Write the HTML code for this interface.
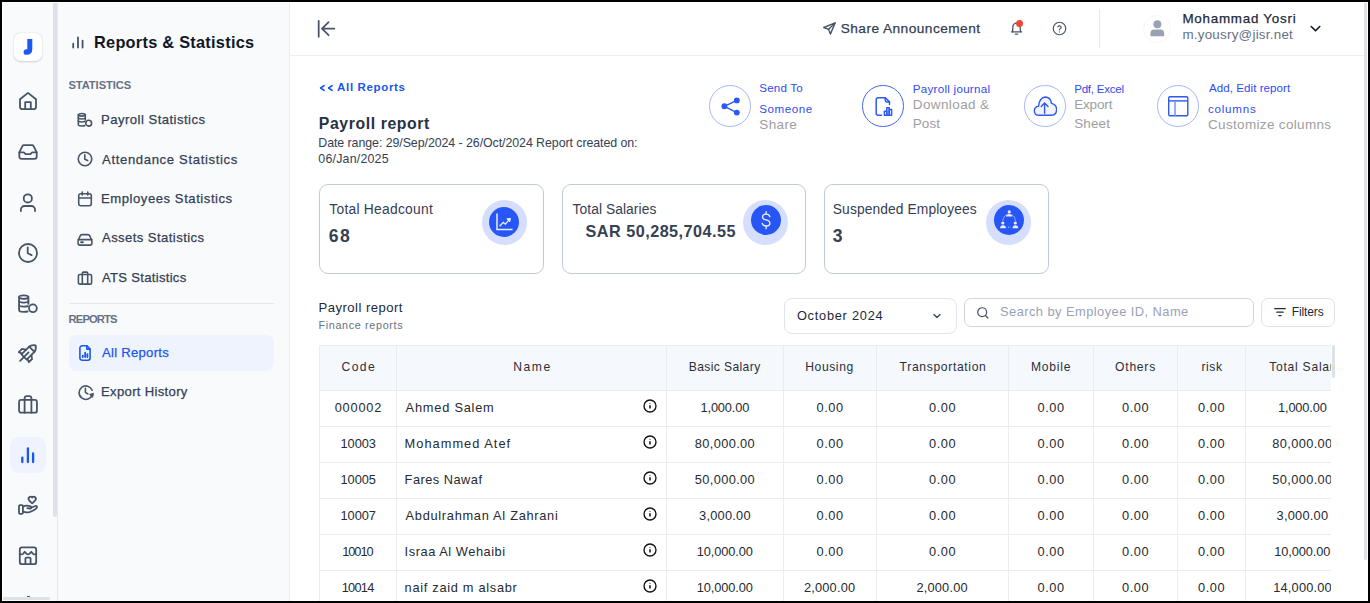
<!DOCTYPE html>
<html><head><meta charset="utf-8"><title>Payroll report</title>
<style>
*{margin:0;padding:0;box-sizing:border-box}
html,body{width:1370px;height:603px;overflow:hidden;background:#000}
body{position:relative;font-family:"Liberation Sans",sans-serif}
#app{position:absolute;left:0;top:0;width:1370px;height:603px;background:#fff;clip-path:inset(2px 2px 2px 2px);overflow:hidden}
.a{position:absolute}
.t{position:absolute;white-space:nowrap;line-height:1}
.m{-webkit-text-stroke:0.25px currentColor}
#clip{position:absolute;left:0;top:0;width:1331px;height:603px;overflow:hidden}
</style></head><body>
<div id="app">
<div class="a" style="left:3px;top:3px;width:54px;height:600px;background:#f9fafb"></div>
<div class="a" style="left:57px;top:3px;width:1px;height:600px;background:#e6e8ec"></div>
<div class="a" style="left:53px;top:3px;width:3.6px;height:514px;background:#dde1e8;border-radius:0 0 2px 2px"></div>
<div class="a" style="left:3px;top:597px;width:47px;height:3px;background:#dde1e8;border-radius:0 2px 2px 0"></div>
<div class="a" style="left:14px;top:33px;width:28.3px;height:28.3px;background:#fff;border-radius:7px;box-shadow:0 0.5px 2px rgba(16,24,40,0.18)"></div>
<svg class="a" style="left:14px;top:33px" width="28" height="28" viewBox="0 0 28 28"><path d="M13.3 6H18.3V16Q18.3 21.8 12.4 21.8Q9.6 21.8 9.6 19.2Q9.6 16.4 12.4 16.2H13.3Z" fill="#1c58f3"/></svg>
<div class="a" style="left:27px;top:595.6px;width:3px;height:1.6px;border-radius:1px;background:#475467"></div>
<div class="a" style="left:10px;top:437px;width:36px;height:36px;background:#eef3ff;border-radius:9px"></div>
<svg class="a" style="left:16.00px;top:89.30px" width="24" height="24" viewBox="0 0 24 24" fill="none" stroke="#475467" stroke-width="1.8" stroke-linecap="round" stroke-linejoin="round" ><path d="M4 10.2L12 3.9L20 10.2V18.1a2 2 0 0 1-2 2H6a2 2 0 0 1-2-2Z"/><path d="M9.2 20.1V13.2H14.8V20.1"/></svg>
<svg class="a" style="left:16.00px;top:139.80px" width="24" height="24" viewBox="0 0 24 24" fill="none" stroke="#475467" stroke-width="1.8" stroke-linecap="round" stroke-linejoin="round" ><path d="M3.3 12.3L6.4 6.1Q6.9 5.2 8 5.2H16Q17.1 5.2 17.6 6.1L20.7 12.3V16.8a2 2 0 0 1-2 2H5.3a2 2 0 0 1-2-2Z"/><path d="M3.3 12.3H7.3Q8.1 12.3 8.6 13L9.1 13.6Q9.6 14.2 10.4 14.2H13.6Q14.4 14.2 14.9 13.6L15.4 13Q15.9 12.3 16.7 12.3H20.7"/></svg>
<svg class="a" style="left:16.00px;top:191.00px" width="24" height="24" viewBox="0 0 24 24" fill="none" stroke="#475467" stroke-width="1.8" stroke-linecap="round" stroke-linejoin="round" ><circle cx="11.8" cy="7.4" r="4.1"/><path d="M4.9 20.1V18.6a3.6 3.6 0 0 1 3.6-3.6H15.4a3.6 3.6 0 0 1 3.6 3.6V20.1"/></svg>
<svg class="a" style="left:16.00px;top:240.60px" width="24" height="24" viewBox="0 0 24 24" fill="none" stroke="#475467" stroke-width="1.8" stroke-linecap="round" stroke-linejoin="round" ><circle cx="12" cy="12" r="9"/><path d="M11.7 6.3V12.3L15.6 14.1"/></svg>
<svg class="a" style="left:16.00px;top:292.00px" width="24" height="24" viewBox="0 0 24 24" fill="none" stroke="#475467" stroke-width="1.8" stroke-linecap="round" stroke-linejoin="round" ><ellipse cx="7.75" cy="5.1" rx="4.65" ry="1.7"/><path d="M3.1 5.1V18.3Q3.1 19.9 7.75 19.9Q9.9 19.9 11.6 19.5"/><path d="M12.4 5.1V11.9"/><path d="M3.1 9.1Q3.1 10.6 7.75 10.6Q12.4 10.6 12.4 9.1"/><path d="M3.1 13.1Q3.1 14.6 7.75 14.6Q10.6 14.6 12 14.1"/><circle cx="16.9" cy="16.3" r="3.9"/></svg>
<svg class="a" style="left:16.00px;top:341.40px" width="24" height="24" viewBox="0 0 24 24" fill="none" stroke="#475467" stroke-width="1.8" stroke-linecap="round" stroke-linejoin="round" ><g transform="rotate(45 12 12)"><path d="M8.3 17.6V7Q8.5 3.4 12 1.2Q15.5 3.4 15.7 7V17.6Z"/><path d="M8.3 6.6H15.7"/><path d="M8.3 10.8L4.9 13.4V17.9L8.3 16.6"/><path d="M15.7 10.8L19.1 13.4V17.9L15.7 16.6"/><path d="M12 11.2V23.2"/></g></svg>
<svg class="a" style="left:16.00px;top:391.80px" width="24" height="24" viewBox="0 0 24 24" fill="none" stroke="#475467" stroke-width="1.8" stroke-linecap="round" stroke-linejoin="round" ><rect x="3.1" y="7.9" width="17.8" height="12.8" rx="2"/><path d="M8.6 7.9V6.3a2.2 2.2 0 0 1 2.2-2.2h2.4a2.2 2.2 0 0 1 2.2 2.2V7.9"/><path d="M8.6 7.9V20.7M15.4 7.9V20.7"/></svg>
<svg class="a" style="left:16.00px;top:443.00px" width="24" height="24" viewBox="0 0 24 24" fill="none" stroke="#1a56f0" stroke-width="2.3" stroke-linecap="round" stroke-linejoin="round" ><path d="M6.3 19V14.6M11.9 19V5.3M17.1 19V10.5"/></svg>
<svg class="a" style="left:16.00px;top:492.60px" width="24" height="24" viewBox="0 0 24 24" fill="none" stroke="#475467" stroke-width="1.8" stroke-linecap="round" stroke-linejoin="round" ><rect x="3" y="12.2" width="3.9" height="8.6" rx="1"/><path d="M6.9 13.6Q9.5 12.2 12.5 12.8L14.5 13.3Q15.6 13.7 15.2 14.8Q14.8 15.7 13.6 15.5L11.3 15.2"/><path d="M15.2 14.8L19.2 13Q20.8 12.6 21 13.8Q21.1 14.6 20.3 15.3Q17.4 18 13.5 19.2Q11.2 19.7 9 19.1L6.9 18.6"/><path d="M16.2 10.4L13.3 7.6Q11.8 6 13.1 4.4Q14.6 2.8 16.2 4.5Q17.8 2.8 19.3 4.4Q20.6 6 19.1 7.6Z"/></svg>
<svg class="a" style="left:16.00px;top:544.20px" width="24" height="24" viewBox="0 0 24 24" fill="none" stroke="#475467" stroke-width="1.8" stroke-linecap="round" stroke-linejoin="round" ><rect x="3.8" y="3.4" width="16.4" height="16.8" rx="2.3"/><path d="M3.8 9.6Q5.6 11.2 7.3 9.6L8.7 7.8L10.4 9.6Q12 11.2 13.6 9.6L15.3 7.8L16.8 9.6Q18.5 11.2 20.2 9.6"/><path d="M9.4 20.2V14.6a1 1 0 0 1 1-1H13.6a1 1 0 0 1 1 1V20.2"/></svg>
<div class="a" style="left:58px;top:3px;width:231px;height:600px;background:#f9fafb"></div>
<div class="a" style="left:289px;top:3px;width:1px;height:600px;background:#e8eaef"></div>
<div class="a" style="left:69px;top:303px;width:205px;height:1px;background:#e4e7ec"></div>
<div class="a" style="left:69px;top:335px;width:205px;height:35.5px;background:#eef3fe;border-radius:8px"></div>
<svg class="a" style="left:69.00px;top:33.00px" width="18" height="18" viewBox="0 0 24 24" fill="none" stroke="#475467" stroke-width="2.4" stroke-linecap="round" stroke-linejoin="round" ><path d="M5.6 19.3V14.2M12 19.3V6M18.1 19.3V10.1"/></svg>
<svg class="a" style="left:76.00px;top:111.00px" width="18" height="18" viewBox="0 0 24 24" fill="none" stroke="#475467" stroke-width="2.1" stroke-linecap="round" stroke-linejoin="round" ><ellipse cx="7.75" cy="5.1" rx="4.65" ry="1.7"/><path d="M3.1 5.1V18.3Q3.1 19.9 7.75 19.9Q9.9 19.9 11.6 19.5"/><path d="M12.4 5.1V11.9"/><path d="M3.1 9.1Q3.1 10.6 7.75 10.6Q12.4 10.6 12.4 9.1"/><path d="M3.1 13.1Q3.1 14.6 7.75 14.6Q10.6 14.6 12 14.1"/><circle cx="16.9" cy="16.3" r="3.9"/></svg>
<svg class="a" style="left:76.00px;top:149.90px" width="18" height="18" viewBox="0 0 24 24" fill="none" stroke="#475467" stroke-width="2.1" stroke-linecap="round" stroke-linejoin="round" ><circle cx="12" cy="12" r="9"/><path d="M11.7 6.3V12.3L15.6 14.1"/></svg>
<svg class="a" style="left:75.90px;top:190.00px" width="18" height="18" viewBox="0 0 24 24" fill="none" stroke="#475467" stroke-width="2.1" stroke-linecap="round" stroke-linejoin="round" ><rect x="3.6" y="5" width="16.8" height="16" rx="2.6"/><path d="M3.6 10.6H20.4M8.3 2.8V6.6M15.7 2.8V6.6"/></svg>
<svg class="a" style="left:76.00px;top:229.80px" width="18" height="18" viewBox="0 0 24 24" fill="none" stroke="#475467" stroke-width="2.1" stroke-linecap="round" stroke-linejoin="round" ><path d="M2.8 14.6L5.4 8.2Q6.2 6.2 8.4 6.2H15.6Q17.8 6.2 18.6 8.2L21.2 14.6V17.6a2.6 2.6 0 0 1-2.6 2.6H5.4a2.6 2.6 0 0 1-2.6-2.6Z"/><path d="M2.8 12.8H21.2"/><path d="M6.8 16.2H9.2" stroke-width="2.6"/></svg>
<svg class="a" style="left:76.00px;top:269.00px" width="18" height="18" viewBox="0 0 24 24" fill="none" stroke="#475467" stroke-width="2.1" stroke-linecap="round" stroke-linejoin="round" ><rect x="3.2" y="7.4" width="17.6" height="12.8" rx="2"/><path d="M8.4 7.4V5.8a1.6 1.6 0 0 1 1.6-1.6h4a1.6 1.6 0 0 1 1.6 1.6V7.4M8.4 7.4V20.2M15.6 7.4V20.2"/></svg>
<svg class="a" style="left:76.00px;top:343.80px" width="18" height="18" viewBox="0 0 24 24" fill="none" stroke="#1a56f0" stroke-width="2.1" stroke-linecap="round" stroke-linejoin="round" ><path d="M5.2 5.4a3 3 0 0 1 3-3H14.6L18.8 6.6V18.6a3 3 0 0 1-3 3H8.2a3 3 0 0 1-3-3Z"/><path d="M14.4 2.6V6.8H18.6"/><path d="M9 17.4V15.4M12.2 17.4V11.6M15.2 17.4V13.4" stroke-width="2.4"/></svg>
<svg class="a" style="left:76.50px;top:383.00px" width="18" height="18" viewBox="0 0 24 24" fill="none" stroke="#475467" stroke-width="2.1" stroke-linecap="round" stroke-linejoin="round" ><path d="M20.2 9.6A9 9 0 1 0 20.4 15.6"/><path d="M11.2 7.2V12.4L14.4 14.6"/><path d="M17.6 15.2L21.6 14.2L20.6 18.4Z" fill="#475467"/></svg>
<div class="a" style="left:290px;top:55px;width:1074px;height:1px;background:#eceef2"></div>
<div class="a" style="left:1364px;top:3px;width:3.4px;height:557px;background:#dde1e8;border-radius:0 0 2px 2px"></div>
<svg class="a" style="left:310px;top:14px" width="32" height="30" viewBox="0 0 32 30" fill="none" stroke="#475467" stroke-width="1.75" stroke-linecap="round" stroke-linejoin="round"><path d="M8.7 6.8V22.8M18.6 8.1L12 14.7L18.6 21.2M12.2 14.7H24.3"/></svg>
<svg class="a" style="left:822.00px;top:20.70px" width="15" height="15" viewBox="0 0 24 24" fill="none" stroke="#475467" stroke-width="2.2" stroke-linecap="round" stroke-linejoin="round" ><path d="M21 3L2.8 10.4L10.5 13.3L13.4 21Z"/><path d="M21 3L10.5 13.3"/></svg>
<svg class="a" style="left:1008.70px;top:20.50px" width="15" height="15" viewBox="0 0 24 24" fill="none" stroke="#475467" stroke-width="2.1" stroke-linecap="round" stroke-linejoin="round" ><path d="M5.6 17.2L6.3 9.2a5.7 5.7 0 0 1 11.4 0L18.4 17.2"/><path d="M3.9 17.3H20.1"/><path d="M10.3 21.1H13.7"/></svg>
<div class="a" style="left:1015.9px;top:20px;width:7px;height:7px;border-radius:50%;background:#f04438"></div>
<svg class="a" style="left:1052.00px;top:20.50px" width="15" height="15" viewBox="0 0 24 24" fill="none" stroke="#475467" stroke-width="1.9" stroke-linecap="round" stroke-linejoin="round" ><circle cx="12" cy="12" r="10"/><path d="M9.4 9.4a2.7 2.7 0 0 1 5.2 0.8c0 1.8-2.6 2.1-2.6 3.6"/><path d="M12 17.4V17.5"/></svg>
<div class="a" style="left:1099px;top:9px;width:1px;height:39px;background:#e4e7ec"></div>
<div class="a" style="left:1143px;top:14.5px;width:28px;height:28px;border-radius:50%;border:1px solid #f6f7f9"></div>
<svg class="a" style="left:1145px;top:16px" width="24" height="24" viewBox="0 0 24 24" fill="#98a2b3"><circle cx="12.4" cy="8.3" r="3.95"/><path d="M5.4 19.4V17.6a4 4 0 0 1 4-4H15.2a4 4 0 0 1 4 4V19.4a0.8 0.8 0 0 1-0.8 0.8H6.2a0.8 0.8 0 0 1-0.8-0.8Z"/></svg>
<svg class="a" style="left:1306.50px;top:20.30px" width="17" height="17" viewBox="0 0 24 24" fill="none" stroke="#101828" stroke-width="2.3" stroke-linecap="round" stroke-linejoin="round" ><path d="M6 9.2L12 15.2L18 9.2"/></svg>
<svg class="a" style="left:316px;top:80px" width="20" height="14" viewBox="0 0 20 14" fill="none" stroke="#1a56f0" stroke-width="1.7" stroke-linecap="round" stroke-linejoin="round"><path d="M8 5.6L4.6 8L8 10.4M16 5.6L12.6 8L16 10.4"/></svg>
<div class="a" style="left:709px;top:85.2px;width:41.6px;height:41.6px;border-radius:50%;border:1.1px solid #a3b7fb"></div>
<div class="a" style="left:862px;top:85.2px;width:41.6px;height:41.6px;border-radius:50%;border:1.1px solid #3f66f5"></div>
<div class="a" style="left:1024px;top:85.2px;width:41.6px;height:41.6px;border-radius:50%;border:1.1px solid #a3b7fb"></div>
<div class="a" style="left:1157px;top:85.2px;width:41.6px;height:41.6px;border-radius:50%;border:1.1px solid #a3b7fb"></div>
<svg class="a" style="left:718px;top:94px" width="24" height="24" viewBox="0 0 24 24" fill="#2a59f4" stroke="#2a59f4" stroke-width="1.3"><path d="M6.4 12.3L18.8 6.4M6.4 12.3L18.8 18.6" fill="none"/><circle cx="6.4" cy="12.3" r="2.3"/><circle cx="18.8" cy="6.4" r="2.3"/><circle cx="18.8" cy="18.6" r="2.3"/></svg>
<svg class="a" style="left:871px;top:94px" width="24" height="24" viewBox="0 0 24 24" fill="none" stroke="#2a59f4" stroke-width="1.5" stroke-linejoin="round" stroke-linecap="round"><path d="M10.5 21.3H7.2a2 2 0 0 1-2-2V5.7a2 2 0 0 1 2-2H14.3L18.5 7.9V10.6"/><path d="M14.3 3.7V6.4a1.5 1.5 0 0 0 1.5 1.5H18.5"/><rect x="13.4" y="17.3" width="2.4" height="4" /><rect x="15.8" y="13.8" width="2.4" height="7.5"/><rect x="18.2" y="15.4" width="2.4" height="5.9"/></svg>
<svg class="a" style="left:1033px;top:94px" width="24" height="24" viewBox="0 0 24 24" fill="#f2f4f8" stroke="#2a59f4" stroke-width="1.4" stroke-linejoin="round" stroke-linecap="round"><path d="M6.4 21.3Q1.3 21.3 1.3 16.8Q1.3 12.6 5.6 12.1Q6.3 4 12.1 3Q17.6 3.2 18.5 9.4Q23.6 10.6 23.6 15.6Q23.6 21.3 18 21.3Z"/><path d="M11.6 19.2V9.2M8.2 12.5L11.6 9.1L15 12.5" fill="none"/></svg>
<svg class="a" style="left:1166px;top:94px" width="24" height="24" viewBox="0 0 24 24" fill="none" stroke="#2a59f4" stroke-width="1.4"><rect x="2.7" y="2.7" width="19.1" height="19" rx="1.2"/><path d="M2.7 6.9H21.8"/><path d="M9 6.9V21.7" stroke="#7e98f7" stroke-width="1.6"/></svg>
<div class="a" style="left:319px;top:184px;width:225px;height:90px;border:1px solid #c2cad6;border-radius:9px"></div>
<div class="a" style="left:562px;top:184px;width:244px;height:90px;border:1px solid #c2cad6;border-radius:9px"></div>
<div class="a" style="left:824px;top:184px;width:225px;height:90px;border:1px solid #c2cad6;border-radius:9px"></div>
<div class="a" style="left:482.0px;top:200.1px;width:44.8px;height:44.8px;border-radius:50%;background:#d5dffd"></div>
<div class="a" style="left:488.8px;top:206.8px;width:30.4px;height:30.4px;border-radius:50%;background:#2855f6"></div>
<div class="a" style="left:743.1px;top:200.1px;width:44.8px;height:44.8px;border-radius:50%;background:#d5dffd"></div>
<div class="a" style="left:750.8px;top:204.60000000000002px;width:30.4px;height:30.4px;border-radius:50%;background:#2855f6"></div>
<div class="a" style="left:986.1px;top:200.1px;width:44.8px;height:44.8px;border-radius:50%;background:#d5dffd"></div>
<div class="a" style="left:993.8px;top:205.0px;width:30.4px;height:30.4px;border-radius:50%;background:#2855f6"></div>
<svg class="a" style="left:492px;top:210px" width="24" height="24" viewBox="0 0 24 24" fill="none" stroke="#e8eeff" stroke-width="1.5" stroke-linecap="square"><path d="M5 4.2V19.5H19.8"/><path d="M8 15.8L11.2 12.4L13.3 14.2L17.5 9.3" stroke-width="1.3"/><path d="M15.3 8.8L18.3 8.3L17.9 11.3Z" fill="#e8eeff" stroke-width="1"/></svg>
<svg class="a" style="left:754px;top:207.8px" width="24" height="24" viewBox="0 0 24 24" fill="none" stroke="#e8eeff" stroke-width="1.4" stroke-linecap="round"><path d="M15.8 8.6Q15.2 6.1 12.2 6.1Q8.5 6.1 8.5 9Q8.5 11.3 12 11.9Q15.9 12.6 15.9 15.2Q15.9 18 12.1 18Q9 18 8.2 15.4"/><path d="M12.1 3.6V6.1M12.1 18V20.6"/></svg>
<svg class="a" style="left:997px;top:208.2px" width="24" height="24" viewBox="0 0 24 24" fill="#e8eeff" stroke="none"><circle cx="12.2" cy="3.9" r="1.6"/><path d="M8.9 8.4Q9.2 5.9 12.2 5.9Q15.2 5.9 15.5 8.4Z"/><circle cx="5.8" cy="15" r="1.6"/><path d="M3 20.2Q3.2 17.3 6 17.3Q8.8 17.3 9 20.2Z"/><circle cx="18.3" cy="15" r="1.6"/><path d="M15.5 20.2Q15.7 17.3 18.4 17.3Q21.1 17.3 21.3 20.2Z"/><path d="M9.6 6.6Q6.6 8.2 5.9 12.6M14.8 6.6Q17.8 8.2 18.4 12.6M10.9 18.9Q12.2 19.7 13.5 18.9" fill="none" stroke="#e8eeff" stroke-width="0.8" stroke-dasharray="1.3 0.7"/></svg>
<div class="a" style="left:784px;top:298px;width:173px;height:36px;border:1px solid #dfe3ea;border-radius:8px"></div>
<svg class="a" style="left:931.00px;top:310.00px" width="12" height="12" viewBox="0 0 24 24" fill="none" stroke="#344054" stroke-width="2.6" stroke-linecap="round" stroke-linejoin="round" ><path d="M6 9L12 15L18 9"/></svg>
<div class="a" style="left:964px;top:298px;width:290px;height:29px;border:1px solid #cfd5de;border-radius:7px"></div>
<svg class="a" style="left:976.20px;top:305.50px" width="14" height="14" viewBox="0 0 24 24" fill="none" stroke="#475467" stroke-width="2.1" stroke-linecap="round" stroke-linejoin="round" ><circle cx="10.6" cy="10.6" r="7.6"/><path d="M16.2 16.2L20.6 20.6"/></svg>
<div class="a" style="left:1261px;top:298px;width:74px;height:29px;border:1px solid #dde2e9;border-radius:7px"></div>
<svg class="a" style="left:1273.00px;top:305.00px" width="14" height="14" viewBox="0 0 24 24" fill="none" stroke="#1d2939" stroke-width="2.1" stroke-linecap="round" stroke-linejoin="round" ><path d="M3 6.4H21M6.5 12.4H17.5M10 18.2H14"/></svg>
<div class="t" style="left:94.00px;top:33.90px;font-size:16.3px;font-weight:bold;letter-spacing:0.283px;color:#101828">Reports &amp; Statistics</div>
<div class="t" style="left:68.40px;top:80.10px;font-size:11.2px;font-weight:bold;letter-spacing:-0.078px;color:#667085">STATISTICS</div>
<div class="t m" style="left:101.00px;top:113.20px;font-size:13.1px;font-weight:normal;letter-spacing:0.471px;color:#344054">Payroll Statistics</div>
<div class="t m" style="left:102.00px;top:152.50px;font-size:13.1px;font-weight:normal;letter-spacing:0.65px;color:#344054">Attendance Statistics</div>
<div class="t m" style="left:101.00px;top:192.40px;font-size:13.1px;font-weight:normal;letter-spacing:0.546px;color:#344054">Employees Statistics</div>
<div class="t m" style="left:102.00px;top:231.40px;font-size:13.1px;font-weight:normal;letter-spacing:0.419px;color:#344054">Assets Statistics</div>
<div class="t m" style="left:102.00px;top:271.00px;font-size:13.1px;font-weight:normal;letter-spacing:0.284px;color:#344054">ATS Statistics</div>
<div class="t" style="left:68.60px;top:314.40px;font-size:11.2px;font-weight:bold;letter-spacing:-0.867px;color:#667085">REPORTS</div>
<div class="t m" style="left:102.10px;top:346.30px;font-size:13.1px;font-weight:normal;letter-spacing:0.26px;color:#1a56f0">All Reports</div>
<div class="t m" style="left:101.00px;top:385.00px;font-size:13.1px;font-weight:normal;letter-spacing:0.323px;color:#344054">Export History</div>
<div class="t m" style="left:840.70px;top:22.20px;font-size:13.7px;font-weight:normal;letter-spacing:0.453px;color:#344054">Share Announcement</div>
<div class="t m" style="left:1182.40px;top:12.40px;font-size:13.4px;font-weight:normal;letter-spacing:0.753px;color:#1d2939">Mohammad Yosri</div>
<div class="t" style="left:1182.40px;top:27.70px;font-size:13.4px;font-weight:normal;letter-spacing:0.237px;color:#667085">m.yousry@jisr.net</div>
<div class="t" style="left:337.10px;top:82.40px;font-size:11.5px;font-weight:bold;letter-spacing:0.65px;color:#1a56f0">All Reports</div>
<div class="t" style="left:318.80px;top:115.70px;font-size:15.8px;font-weight:bold;letter-spacing:0.6px;color:#263244">Payroll report</div>
<div class="t" style="left:318.30px;top:137.20px;font-size:12.4px;font-weight:normal;letter-spacing:-0.069px;color:#344054">Date range: 29/Sep/2024 - 26/Oct/2024 Report created on:</div>
<div class="t" style="left:318.30px;top:153.30px;font-size:12.4px;font-weight:normal;letter-spacing:0.21px;color:#344054">06/Jan/2025</div>
<div class="t" style="left:759.30px;top:82.20px;font-size:11.6px;font-weight:normal;letter-spacing:0.167px;color:#2f4cf0">Send To</div>
<div class="t" style="left:759.30px;top:103.20px;font-size:11.6px;font-weight:normal;letter-spacing:0.551px;color:#2f4cf0">Someone</div>
<div class="t" style="left:759.30px;top:118.10px;font-size:13.5px;font-weight:normal;letter-spacing:0.375px;color:#9e9e9e">Share</div>
<div class="t" style="left:912.80px;top:83.40px;font-size:11.6px;font-weight:normal;letter-spacing:0.265px;color:#2f4cf0">Payroll journal</div>
<div class="t" style="left:912.80px;top:98.30px;font-size:13.5px;font-weight:normal;letter-spacing:0.389px;color:#9e9e9e">Download &amp;</div>
<div class="t" style="left:912.80px;top:116.70px;font-size:13.5px;font-weight:normal;letter-spacing:0.033px;color:#9e9e9e">Post</div>
<div class="t" style="left:1074.20px;top:83.40px;font-size:11.6px;font-weight:normal;letter-spacing:-0.267px;color:#2f4cf0">Pdf, Excel</div>
<div class="t" style="left:1074.20px;top:98.30px;font-size:13.5px;font-weight:normal;letter-spacing:-0.16px;color:#9e9e9e">Export</div>
<div class="t" style="left:1074.20px;top:117.30px;font-size:13.5px;font-weight:normal;letter-spacing:0.125px;color:#9e9e9e">Sheet</div>
<div class="t" style="left:1209.00px;top:82.40px;font-size:11.6px;font-weight:normal;letter-spacing:0.04px;color:#2f4cf0">Add, Edit report</div>
<div class="t" style="left:1208.00px;top:102.90px;font-size:11.6px;font-weight:normal;letter-spacing:0.766px;color:#2f4cf0">columns</div>
<div class="t" style="left:1208.00px;top:118.00px;font-size:13.5px;font-weight:normal;letter-spacing:0.331px;color:#9e9e9e">Customize columns</div>
<div class="t" style="left:329.30px;top:203.10px;font-size:13.8px;font-weight:normal;letter-spacing:0.265px;color:#344054">Total Headcount</div>
<div class="t" style="left:328.70px;top:228.00px;font-size:17.6px;font-weight:bold;letter-spacing:1.5px;color:#364152">68</div>
<div class="t" style="left:572.50px;top:203.10px;font-size:13.8px;font-weight:normal;letter-spacing:0.077px;color:#344054">Total Salaries</div>
<div class="t" style="left:585.60px;top:222.90px;font-size:16.2px;font-weight:bold;letter-spacing:0.482px;color:#364152">SAR 50,285,704.55</div>
<div class="t" style="left:832.80px;top:203.20px;font-size:13.8px;font-weight:normal;letter-spacing:0.106px;color:#344054">Suspended Employees</div>
<div class="t" style="left:832.80px;top:228.00px;font-size:17.6px;font-weight:bold;letter-spacing:0px;color:#364152">3</div>
<div class="t" style="left:318.50px;top:300.90px;font-size:13.1px;font-weight:normal;letter-spacing:0.469px;color:#1d2939">Payroll report</div>
<div class="t" style="left:318.50px;top:319.70px;font-size:10.8px;font-weight:normal;letter-spacing:0.65px;color:#667085">Finance reports</div>
<div class="t" style="left:796.90px;top:309.90px;font-size:12.8px;font-weight:normal;letter-spacing:0.745px;color:#1d2939">October 2024</div>
<div class="t" style="left:1000.00px;top:306.10px;font-size:12.9px;font-weight:normal;letter-spacing:0.434px;color:#98a2b3">Search by Employee ID, Name</div>
<div class="t" style="left:1291.70px;top:305.90px;font-size:12.0px;font-weight:normal;letter-spacing:-0.116px;color:#1d2939">Filters</div>
<div id="clip">
<div class="a" style="left:319px;top:345px;width:1012px;height:46px;background:#f5f8fd"></div>
<div class="a" style="left:319px;top:345px;width:1012px;height:1px;background:#e9ecf1"></div>
<div class="a" style="left:319px;top:390px;width:1012px;height:1px;background:#e9ecf1"></div>
<div class="a" style="left:319px;top:426px;width:1012px;height:1px;background:#e9ecf1"></div>
<div class="a" style="left:319px;top:462px;width:1012px;height:1px;background:#e9ecf1"></div>
<div class="a" style="left:319px;top:498px;width:1012px;height:1px;background:#e9ecf1"></div>
<div class="a" style="left:319px;top:534px;width:1012px;height:1px;background:#e9ecf1"></div>
<div class="a" style="left:319px;top:570px;width:1012px;height:1px;background:#e9ecf1"></div>
<div class="a" style="left:319px;top:345px;width:1px;height:260px;background:#e9ecf1"></div>
<div class="a" style="left:396px;top:345px;width:1px;height:260px;background:#e9ecf1"></div>
<div class="a" style="left:666px;top:345px;width:1px;height:260px;background:#e9ecf1"></div>
<div class="a" style="left:783px;top:345px;width:1px;height:260px;background:#e9ecf1"></div>
<div class="a" style="left:876px;top:345px;width:1px;height:260px;background:#e9ecf1"></div>
<div class="a" style="left:1008px;top:345px;width:1px;height:260px;background:#e9ecf1"></div>
<div class="a" style="left:1093px;top:345px;width:1px;height:260px;background:#e9ecf1"></div>
<div class="a" style="left:1177px;top:345px;width:1px;height:260px;background:#e9ecf1"></div>
<div class="a" style="left:1245px;top:345px;width:1px;height:260px;background:#e9ecf1"></div>
<svg class="a" style="left:643.3px;top:399.1px" width="14" height="14" viewBox="0 0 14 14" fill="none" stroke="#101010" stroke-width="1.35"><circle cx="7" cy="7" r="6"/><path d="M7 6.2V9.6" stroke-width="1.5"/><circle cx="7" cy="4.3" r="0.55" fill="#101010" stroke="none"/></svg>
<svg class="a" style="left:643.3px;top:435.1px" width="14" height="14" viewBox="0 0 14 14" fill="none" stroke="#101010" stroke-width="1.35"><circle cx="7" cy="7" r="6"/><path d="M7 6.2V9.6" stroke-width="1.5"/><circle cx="7" cy="4.3" r="0.55" fill="#101010" stroke="none"/></svg>
<svg class="a" style="left:643.3px;top:471.1px" width="14" height="14" viewBox="0 0 14 14" fill="none" stroke="#101010" stroke-width="1.35"><circle cx="7" cy="7" r="6"/><path d="M7 6.2V9.6" stroke-width="1.5"/><circle cx="7" cy="4.3" r="0.55" fill="#101010" stroke="none"/></svg>
<svg class="a" style="left:643.3px;top:507.1px" width="14" height="14" viewBox="0 0 14 14" fill="none" stroke="#101010" stroke-width="1.35"><circle cx="7" cy="7" r="6"/><path d="M7 6.2V9.6" stroke-width="1.5"/><circle cx="7" cy="4.3" r="0.55" fill="#101010" stroke="none"/></svg>
<svg class="a" style="left:643.3px;top:543.1px" width="14" height="14" viewBox="0 0 14 14" fill="none" stroke="#101010" stroke-width="1.35"><circle cx="7" cy="7" r="6"/><path d="M7 6.2V9.6" stroke-width="1.5"/><circle cx="7" cy="4.3" r="0.55" fill="#101010" stroke="none"/></svg>
<svg class="a" style="left:643.3px;top:579.1px" width="14" height="14" viewBox="0 0 14 14" fill="none" stroke="#101010" stroke-width="1.35"><circle cx="7" cy="7" r="6"/><path d="M7 6.2V9.6" stroke-width="1.5"/><circle cx="7" cy="4.3" r="0.55" fill="#101010" stroke="none"/></svg>
<div class="t" style="left:341.60px;top:361.00px;font-size:12.1px;font-weight:normal;letter-spacing:1.4px;color:#2a2f38">Code</div>
<div class="t" style="left:513.20px;top:361.00px;font-size:12.1px;font-weight:normal;letter-spacing:1.567px;color:#2a2f38">Name</div>
<div class="t" style="left:688.70px;top:361.00px;font-size:12.1px;font-weight:normal;letter-spacing:0.391px;color:#2a2f38">Basic Salary</div>
<div class="t" style="left:805.30px;top:361.00px;font-size:12.1px;font-weight:normal;letter-spacing:0.583px;color:#2a2f38">Housing</div>
<div class="t" style="left:899.60px;top:361.00px;font-size:12.1px;font-weight:normal;letter-spacing:0.669px;color:#2a2f38">Transportation</div>
<div class="t" style="left:1030.90px;top:361.00px;font-size:12.1px;font-weight:normal;letter-spacing:0.78px;color:#2a2f38">Mobile</div>
<div class="t" style="left:1115.10px;top:361.00px;font-size:12.1px;font-weight:normal;letter-spacing:0.76px;color:#2a2f38">Others</div>
<div class="t" style="left:1201.50px;top:361.00px;font-size:12.1px;font-weight:normal;letter-spacing:0.567px;color:#2a2f38">risk</div>
<div class="t" style="left:1269.20px;top:361.00px;font-size:12.1px;font-weight:normal;letter-spacing:0.752px;color:#2a2f38">Total Salary</div>
<div class="t" style="left:334.70px;top:402.20px;font-size:12.8px;font-weight:normal;letter-spacing:0.8px;color:#262a31">000002</div>
<div class="t" style="left:405.60px;top:402.20px;font-size:12.8px;font-weight:normal;letter-spacing:0.78px;color:#262a31">Ahmed Salem</div>
<div class="t" style="left:700.50px;top:402.20px;font-size:12.8px;font-weight:normal;letter-spacing:-0.143px;color:#262a31">1,000.00</div>
<div class="t" style="left:816.55px;top:402.20px;font-size:12.8px;font-weight:normal;letter-spacing:0.567px;color:#262a31">0.00</div>
<div class="t" style="left:929.05px;top:402.20px;font-size:12.8px;font-weight:normal;letter-spacing:0.567px;color:#262a31">0.00</div>
<div class="t" style="left:1037.55px;top:402.20px;font-size:12.8px;font-weight:normal;letter-spacing:0.567px;color:#262a31">0.00</div>
<div class="t" style="left:1122.05px;top:402.20px;font-size:12.8px;font-weight:normal;letter-spacing:0.567px;color:#262a31">0.00</div>
<div class="t" style="left:1198.05px;top:402.20px;font-size:12.8px;font-weight:normal;letter-spacing:0.567px;color:#262a31">0.00</div>
<div class="t" style="left:1278.00px;top:402.20px;font-size:12.8px;font-weight:normal;letter-spacing:-0.143px;color:#262a31">1,000.00</div>
<div class="t" style="left:340.60px;top:438.20px;font-size:12.8px;font-weight:normal;letter-spacing:-0.1px;color:#262a31">10003</div>
<div class="t" style="left:404.60px;top:438.20px;font-size:12.8px;font-weight:normal;letter-spacing:1.033px;color:#262a31">Mohammed Atef</div>
<div class="t" style="left:694.85px;top:438.20px;font-size:12.8px;font-weight:normal;letter-spacing:0.361px;color:#262a31">80,000.00</div>
<div class="t" style="left:816.55px;top:438.20px;font-size:12.8px;font-weight:normal;letter-spacing:0.567px;color:#262a31">0.00</div>
<div class="t" style="left:929.05px;top:438.20px;font-size:12.8px;font-weight:normal;letter-spacing:0.567px;color:#262a31">0.00</div>
<div class="t" style="left:1037.55px;top:438.20px;font-size:12.8px;font-weight:normal;letter-spacing:0.567px;color:#262a31">0.00</div>
<div class="t" style="left:1122.05px;top:438.20px;font-size:12.8px;font-weight:normal;letter-spacing:0.567px;color:#262a31">0.00</div>
<div class="t" style="left:1198.05px;top:438.20px;font-size:12.8px;font-weight:normal;letter-spacing:0.567px;color:#262a31">0.00</div>
<div class="t" style="left:1272.35px;top:438.20px;font-size:12.8px;font-weight:normal;letter-spacing:0.364px;color:#262a31">80,000.00</div>
<div class="t" style="left:340.60px;top:474.20px;font-size:12.8px;font-weight:normal;letter-spacing:-0.1px;color:#262a31">10005</div>
<div class="t" style="left:404.60px;top:474.20px;font-size:12.8px;font-weight:normal;letter-spacing:0.48px;color:#262a31">Fares Nawaf</div>
<div class="t" style="left:694.85px;top:474.20px;font-size:12.8px;font-weight:normal;letter-spacing:0.361px;color:#262a31">50,000.00</div>
<div class="t" style="left:816.55px;top:474.20px;font-size:12.8px;font-weight:normal;letter-spacing:0.567px;color:#262a31">0.00</div>
<div class="t" style="left:929.05px;top:474.20px;font-size:12.8px;font-weight:normal;letter-spacing:0.567px;color:#262a31">0.00</div>
<div class="t" style="left:1037.55px;top:474.20px;font-size:12.8px;font-weight:normal;letter-spacing:0.567px;color:#262a31">0.00</div>
<div class="t" style="left:1122.05px;top:474.20px;font-size:12.8px;font-weight:normal;letter-spacing:0.567px;color:#262a31">0.00</div>
<div class="t" style="left:1198.05px;top:474.20px;font-size:12.8px;font-weight:normal;letter-spacing:0.567px;color:#262a31">0.00</div>
<div class="t" style="left:1272.35px;top:474.20px;font-size:12.8px;font-weight:normal;letter-spacing:0.364px;color:#262a31">50,000.00</div>
<div class="t" style="left:340.60px;top:510.20px;font-size:12.8px;font-weight:normal;letter-spacing:-0.1px;color:#262a31">10007</div>
<div class="t" style="left:405.60px;top:510.20px;font-size:12.8px;font-weight:normal;letter-spacing:0.709px;color:#262a31">Abdulrahman Al Zahrani</div>
<div class="t" style="left:699.05px;top:510.20px;font-size:12.8px;font-weight:normal;letter-spacing:0.243px;color:#262a31">3,000.00</div>
<div class="t" style="left:816.55px;top:510.20px;font-size:12.8px;font-weight:normal;letter-spacing:0.567px;color:#262a31">0.00</div>
<div class="t" style="left:929.05px;top:510.20px;font-size:12.8px;font-weight:normal;letter-spacing:0.567px;color:#262a31">0.00</div>
<div class="t" style="left:1037.55px;top:510.20px;font-size:12.8px;font-weight:normal;letter-spacing:0.567px;color:#262a31">0.00</div>
<div class="t" style="left:1122.05px;top:510.20px;font-size:12.8px;font-weight:normal;letter-spacing:0.567px;color:#262a31">0.00</div>
<div class="t" style="left:1198.05px;top:510.20px;font-size:12.8px;font-weight:normal;letter-spacing:0.567px;color:#262a31">0.00</div>
<div class="t" style="left:1276.55px;top:510.20px;font-size:12.8px;font-weight:normal;letter-spacing:0.243px;color:#262a31">3,000.00</div>
<div class="t" style="left:342.25px;top:546.20px;font-size:12.8px;font-weight:normal;letter-spacing:-1.075px;color:#262a31">10010</div>
<div class="t" style="left:404.60px;top:546.20px;font-size:12.8px;font-weight:normal;letter-spacing:0.554px;color:#262a31">Israa Al Wehaibi</div>
<div class="t" style="left:696.80px;top:546.20px;font-size:12.8px;font-weight:normal;letter-spacing:-0.1px;color:#262a31">10,000.00</div>
<div class="t" style="left:816.55px;top:546.20px;font-size:12.8px;font-weight:normal;letter-spacing:0.567px;color:#262a31">0.00</div>
<div class="t" style="left:929.05px;top:546.20px;font-size:12.8px;font-weight:normal;letter-spacing:0.567px;color:#262a31">0.00</div>
<div class="t" style="left:1037.55px;top:546.20px;font-size:12.8px;font-weight:normal;letter-spacing:0.567px;color:#262a31">0.00</div>
<div class="t" style="left:1122.05px;top:546.20px;font-size:12.8px;font-weight:normal;letter-spacing:0.567px;color:#262a31">0.00</div>
<div class="t" style="left:1198.05px;top:546.20px;font-size:12.8px;font-weight:normal;letter-spacing:0.567px;color:#262a31">0.00</div>
<div class="t" style="left:1274.30px;top:546.20px;font-size:12.8px;font-weight:normal;letter-spacing:-0.1px;color:#262a31">10,000.00</div>
<div class="t" style="left:341.70px;top:582.20px;font-size:12.8px;font-weight:normal;letter-spacing:-0.75px;color:#262a31">10014</div>
<div class="t" style="left:404.60px;top:582.20px;font-size:12.8px;font-weight:normal;letter-spacing:0.706px;color:#262a31">naif zaid m alsabr</div>
<div class="t" style="left:696.80px;top:582.20px;font-size:12.8px;font-weight:normal;letter-spacing:-0.1px;color:#262a31">10,000.00</div>
<div class="t" style="left:803.95px;top:582.20px;font-size:12.8px;font-weight:normal;letter-spacing:0.185px;color:#262a31">2,000.00</div>
<div class="t" style="left:916.45px;top:582.20px;font-size:12.8px;font-weight:normal;letter-spacing:0.185px;color:#262a31">2,000.00</div>
<div class="t" style="left:1037.55px;top:582.20px;font-size:12.8px;font-weight:normal;letter-spacing:0.567px;color:#262a31">0.00</div>
<div class="t" style="left:1122.05px;top:582.20px;font-size:12.8px;font-weight:normal;letter-spacing:0.567px;color:#262a31">0.00</div>
<div class="t" style="left:1198.05px;top:582.20px;font-size:12.8px;font-weight:normal;letter-spacing:0.567px;color:#262a31">0.00</div>
<div class="t" style="left:1273.25px;top:582.20px;font-size:12.8px;font-weight:normal;letter-spacing:0.189px;color:#262a31">14,000.00</div>
</div>
<div class="a" style="left:1331.6px;top:345px;width:3.3px;height:33px;background:#dde1e8;border-radius:2px"></div>
</div>
</body></html>
